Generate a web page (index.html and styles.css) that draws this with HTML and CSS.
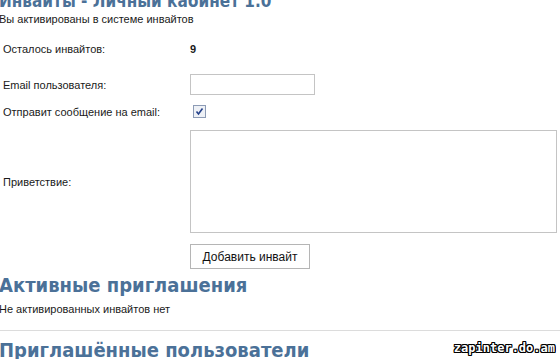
FILE: index.html
```html
<!DOCTYPE html>
<html lang="ru">
<head>
<meta charset="utf-8">
<link rel="stylesheet" href="styles.css">
</head>
<body>
<div class="page">
  <h1 class="title">Инвайты - Личный кабинет 1.0</h1>
  <p class="note">Вы активированы в системе инвайтов</p>
  <div class="form">
    <div class="row row-left">
      <span class="label">Осталось инвайтов:</span>
      <span class="value">9</span>
    </div>
    <div class="row row-email">
      <span class="label">Email пользователя:</span>
      <span class="input"></span>
    </div>
    <div class="row row-check">
      <span class="label">Отправит сообщение на email:</span>
      <span class="check">
        <svg width="13" height="13" viewBox="0 0 13 13"><rect x="0.5" y="0.5" width="12" height="12" fill="#eef1f6" stroke="#8c9bb5"/><path d="M3.5 6.5 L5.5 9 L9.5 3.5" fill="none" stroke="#24418a" stroke-width="1.6"/></svg>
      </span>
    </div>
    <div class="row row-text">
      <span class="label">Приветствие:</span>
      <span class="textarea"></span>
    </div>
    <div class="row row-btn">
      <span class="label"></span>
      <span class="button">Добавить инвайт</span>
    </div>
  </div>
  <h2 class="heading">Активные приглашения</h2>
  <p class="note note2">Не активированных инвайтов нет</p>
  <div class="rule"></div>
  <div class="last">
    <h2 class="heading heading2">Приглашённые пользователи</h2>
    <span class="watermark">zapinter.do.am</span>
  </div>
</div>
</body>
</html>
```
FILE: styles.css
```css
html, body {
  margin: 0;
  padding: 0;
  background: #fff;
  overflow: hidden;
}
.page {
  width: 560px;
  height: 359px;
  overflow: hidden;
  font-family: "Liberation Sans", Arial, sans-serif;
  font-size: 11px;
  color: #1a1a1a;
}
.title {
  margin: -11px 0 0 -1px;
  font-family: "DejaVu Sans Condensed", "DejaVu Sans", Verdana, sans-serif;
  font-stretch: condensed;
  font-size: 17px;
  line-height: 24px;
  font-weight: bold;
  color: #4b7198;
  white-space: nowrap;
}
.note {
  margin: -1px 0 0 -1px;
  line-height: 14px;
}
.form {
  margin-top: 13px;
  display: flex;
  flex-direction: column;
}
.row {
  display: flex;
  align-items: center;
}
.label {
  width: 187px;
  padding-left: 3px;
  flex: none;
}
.value {
  font-weight: bold;
}
.row-left {
  height: 20px;
}
.row-email {
  margin-top: 15px;
}
.input {
  width: 123px;
  height: 19px;
  border: 1px solid #c4c4c4;
  background: #fff;
}
.row-check {
  margin-top: 10px;
}
.check {
  display: flex;
  margin-left: 3px;
}
.row-text {
  margin-top: 12px;
}
.textarea {
  width: 365px;
  height: 101px;
  border: 1px solid #c4c4c4;
}
.row-btn {
  margin-top: 11px;
}
.button {
  width: 118px;
  height: 23px;
  border: 1px solid #b5b5b5;
  display: flex;
  align-items: center;
  justify-content: center;
  font-size: 12px;
  color: #111;
  background: #fff;
}
.heading {
  margin: 4px 0 0 -1px;
  font-family: "DejaVu Sans Condensed", "DejaVu Sans", Verdana, sans-serif;
  font-stretch: condensed;
  font-size: 20px;
  line-height: 24px;
  font-weight: bold;
  color: #4b7198;
  white-space: nowrap;
}
.note2 {
  margin-top: 5px;
}
.rule {
  margin-top: 14px;
  height: 1px;
  background: #dcdcdc;
}
.last {
  display: flex;
  align-items: flex-start;
  justify-content: space-between;
  margin-top: 7px;
}
.heading2 {
  margin-top: 0;
}
.watermark {
  margin: 3px 5px 0 0;
  font-family: "DejaVu Sans Mono", monospace;
  font-weight: bold;
  font-size: 12px;
  line-height: 14px;
  color: #fff;
  text-shadow: 1px 0 0 #000, -1px 0 0 #000, 0 1px 0 #000, 0 -1px 0 #000, 1px 1px 0 #000, -1px -1px 0 #000, 1px -1px 0 #000, -1px 1px 0 #000;
}
```
